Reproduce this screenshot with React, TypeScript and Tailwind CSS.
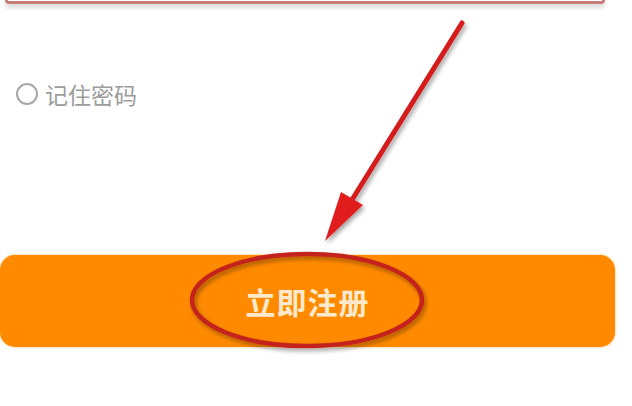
export default function App() {
  return (
    <div className="relative w-[632px] h-[406px] overflow-hidden bg-white font-['Noto_Sans_CJK_SC','Noto_Sans',sans-serif]">
      {/* bottom edge of the input box above */}
      <div className="ml-[5px] w-[600px] h-[4px] border-x-[3px] border-b-[3px] border-[#c97a7a] rounded-b-[5px] shadow-[0_3px_5px_rgba(0,0,0,0.22)]" />

      {/* remember password */}
      <div className="mt-[79px] ml-[16px] flex items-center gap-[7px]">
        <span className="w-[22px] h-[22px] rounded-full border-2 border-[#a8a8a8]" />
        <span className="text-[23px] leading-[22px] text-[#9c9c9c]">记住密码</span>
      </div>

      {/* register button */}
      <div className="mt-[150px] w-[615px] h-[92px] rounded-[15px] bg-[#ff8a00] shadow-[0_0_3px_rgba(255,170,60,0.7)] flex items-center justify-center">
        <span className="text-[30px] font-bold leading-none text-[#fde9cc] tracking-[1px]">立即注册</span>
      </div>

      {/* annotation overlay */}
      <svg className="absolute inset-0 pointer-events-none" width="632" height="406" viewBox="0 0 632 406">
        <defs>
          <filter id="sh" x="-20%" y="-20%" width="140%" height="140%">
            <feDropShadow dx="2" dy="3" stdDeviation="2" floodColor="#000" floodOpacity="0.35" />
          </filter>
        </defs>
        <g filter="url(#sh)">
          <line x1="462" y1="23" x2="350" y2="203" stroke="#d41c1c" strokeWidth="5" strokeLinecap="round" />
          <polygon points="325,241 341,192 363,205" fill="#e01e1e" />
          <ellipse cx="307" cy="300" rx="115" ry="46" fill="none" stroke="#c4221a" strokeWidth="4.5" />
        </g>
      </svg>
    </div>
  );
}
